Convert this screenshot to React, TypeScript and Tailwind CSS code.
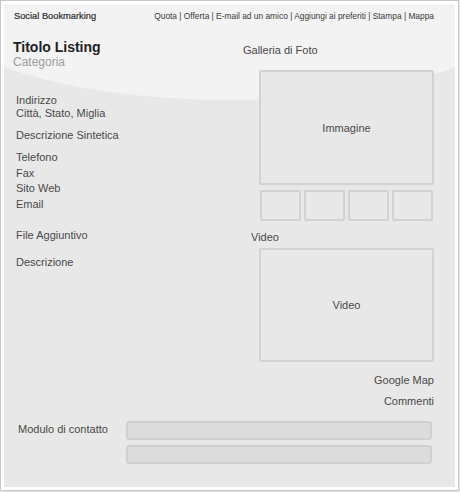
export default function App() {
  const label = "text-[11px] leading-[13px] text-[#484848]";
  return (
    <div className="w-[460px] h-[493px] bg-white font-['Liberation_Sans',Arial,sans-serif]">
      <div className="w-[459px] h-[491px] border border-[#c8c8c8] p-[3px] shadow-[1px_1px_0_#e4e4e4]">
        <div className="relative w-full h-full overflow-hidden bg-[#e8e8e8]">
          <div className="absolute left-[-78px] top-[-104px] w-[608px] h-[200px] rounded-[50%] bg-[#f3f3f3]" />
          <div className="relative flex flex-col">
            {/* header */}
            <div className="flex items-baseline justify-between pl-[10px] pr-[21px] pt-[6px]">
              <span className="text-[9.3px] leading-[12px] text-[#2e2e2e] [-webkit-text-stroke:0.2px_#2e2e2e]">Social Bookmarking</span>
              <span className="text-[8.4px] leading-[12px] text-[#3a3a3a]">
                Quota | Offerta | E-mail ad un amico | Aggiungi ai preferiti | Stampa | Mappa
              </span>
            </div>
            {/* body */}
            <div className="flex pt-[17px]">
              <div className="w-[239px] flex flex-col">
                <div className="pl-[9px]">
                  <div className="text-[14px] leading-[16px] font-bold text-[#222]">Titolo Listing</div>
                  <div className="text-[12px] leading-[14px] text-[#9c9c9c]">Categoria</div>
                </div>
                <div className="pl-[12px] flex flex-col">
                  <div className={`${label} mt-[25px]`}>
                    <div>Indirizzo</div>
                    <div>Città, Stato, Miglia</div>
                  </div>
                  <div className={`${label} mt-[9px]`}>Descrizione Sintetica</div>
                  <div className="text-[11px] leading-[15.7px] text-[#484848] mt-[8px]">
                    <div>Telefono</div>
                    <div>Fax</div>
                    <div>Sito Web</div>
                    <div>Email</div>
                  </div>
                  <div className={`${label} mt-[16px]`}>File Aggiuntivo</div>
                  <div className={`${label} mt-[14px]`}>Descrizione</div>
                </div>
              </div>
              <div className="w-[192px] flex flex-col mt-[5px]">
                <div className={label}>Galleria di Foto</div>
                <div className="ml-[16px] mt-[13px] w-[175px] h-[115px] border-2 border-[#d2d2d2] rounded-[2px] bg-[#e8e8e8] flex items-center justify-center">
                  <span className="text-[11px] text-[#4a4a4a] mt-[1px]">Immagine</span>
                </div>
                <div className="ml-[17px] mt-[5px] w-[173px] grid grid-cols-4 gap-[3px]">
                  <div className="h-[31px] border-2 border-[#d2d2d2] rounded-[2px]" />
                  <div className="h-[31px] border-2 border-[#d2d2d2] rounded-[2px]" />
                  <div className="h-[31px] border-2 border-[#d2d2d2] rounded-[2px]" />
                  <div className="h-[31px] border-2 border-[#d2d2d2] rounded-[2px]" />
                </div>
                <div className={`${label} ml-[8px] mt-[10px]`}>Video</div>
                <div className="ml-[16px] mt-[4px] w-[175px] h-[114px] border-2 border-[#d2d2d2] rounded-[2px] bg-[#e8e8e8] flex items-center justify-center">
                  <span className="text-[11px] text-[#4a4a4a] mt-[1px]">Video</span>
                </div>
                <div className={`${label} mt-[12px] text-right pr-[1px]`}>Google Map</div>
                <div className={`${label} mt-[8px] text-right pr-[1px]`}>Commenti</div>
              </div>
            </div>
            {/* contact */}
            <div className="flex mt-[13px] pl-[14px] pr-[23px]">
              <div className={`${label} w-[108px] mt-[2px]`}>Modulo di contatto</div>
              <div className="flex-1 flex flex-col gap-[5px]">
                <div className="h-[19px] border-2 border-[#d0d0d0] bg-[#dcdcdc] rounded-[3px]" />
                <div className="h-[19px] border-2 border-[#d0d0d0] bg-[#dcdcdc] rounded-[3px]" />
              </div>
            </div>
          </div>
        </div>
      </div>
    </div>
  );
}
